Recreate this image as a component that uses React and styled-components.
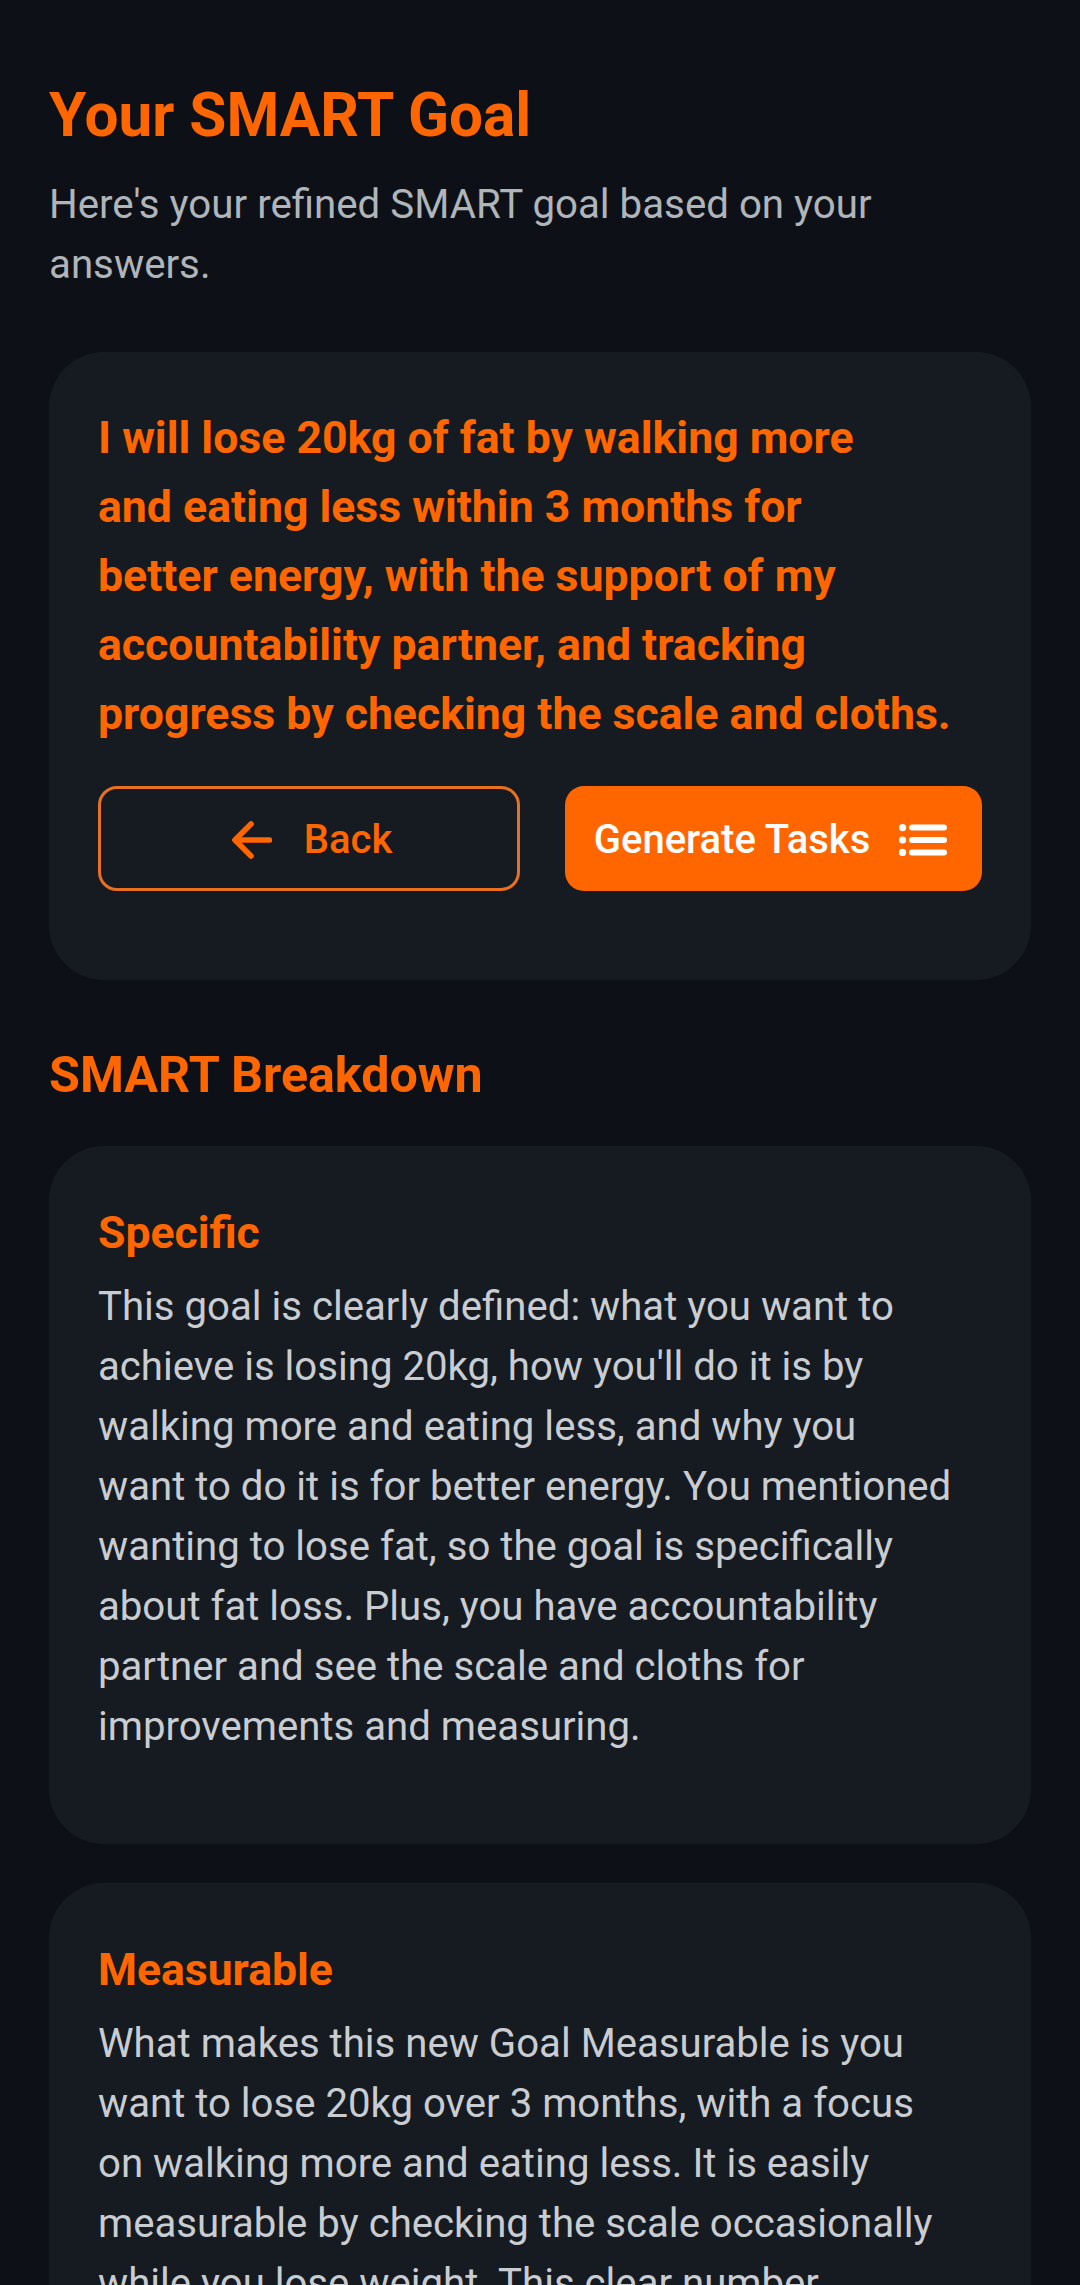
import React from 'react';
import styled, { createGlobalStyle } from 'styled-components';

const GlobalStyle = createGlobalStyle`
  html, body {
    margin: 0;
    height: 2285px;
    overflow: hidden;
    background: #0d1117;
  }
  * {
    box-sizing: border-box;
  }
`;

const Page = styled.div`
  width: 1080px;
  height: 2285px;
  overflow: hidden;
  padding: 75px 49px 0;
  font-family: Roboto, sans-serif;
  background: #0d1117;
`;

const Title = styled.h1`
  margin: 0;
  font-size: 60.3px;
  line-height: 82px;
  font-weight: 700;
  color: #ff6600;
`;

const Subtitle = styled.p`
  margin: 18px 0 0;
  font-size: 40.25px;
  line-height: 60px;
  color: #b0b5ba;
`;

const Card = styled.section`
  margin-top: ${(p) => p.$gap || 39}px;
  padding: ${(p) => p.$top || 49}px 49px ${(p) => p.$bottom || 49}px;
  border-radius: 55px;
  background: #161b22;
`;

const GoalText = styled.p`
  margin: 0;
  font-size: 44.6px;
  line-height: 69px;
  font-weight: 700;
  color: #ff6600;
`;

const Actions = styled.div`
  display: flex;
  justify-content: space-between;
  margin-top: 37px;
  margin-bottom: 40px;
`;

const Button = styled.button`
  display: flex;
  align-items: center;
  justify-content: center;
  gap: ${(p) => p.$gap}px;
  width: ${(p) => p.$width}px;
  height: 105px;
  padding: 2px ${(p) => p.$trim || 0}px 0 ${(p) => p.$shift || 0}px;
  border-radius: 19px;
  border: ${(p) => (p.$primary ? 'none' : '3px solid #e8701f')};
  background: ${(p) => (p.$primary ? '#ff6600' : 'transparent')};
  color: ${(p) => (p.$primary ? '#ffffff' : '#ff6600')};
  font-family: inherit;
  font-size: 40px;
  font-weight: 500;
`;

const SectionTitle = styled.h2`
  margin: 63px 0 0;
  font-size: 50.2px;
  line-height: 64px;
  font-weight: 700;
  color: #ff6600;
`;

const CardTitle = styled.h3`
  margin: 0 0 6px;
  font-size: 44.5px;
  line-height: 76px;
  font-weight: 700;
  color: #ff6600;
`;

const Body = styled.p`
  margin: 0;
  font-size: 40.15px;
  line-height: 60px;
  color: #c9cdd1;
`;

const Line = styled.span`
  display: block;
  white-space: nowrap;
`;

const BackIcon = () => (
  <svg width="40" height="38" viewBox="0 0 40 38" fill="none" stroke="currentColor" strokeWidth="5.6" strokeLinecap="round" strokeLinejoin="round">
    <path d="M37.5 19H3.5" />
    <path d="M19 3L3 19L19 35" />
  </svg>
);

const TasksIcon = () => (
  <svg width="48" height="32" viewBox="0 0 48 32" fill="none">
    <g fill="currentColor">
      <circle cx="3.6" cy="3.6" r="3.6" />
      <circle cx="3.6" cy="16" r="3.6" />
      <circle cx="3.6" cy="28.4" r="3.6" />
    </g>
    <g stroke="currentColor" strokeWidth="6" strokeLinecap="round">
      <path d="M13 3.6H45" />
      <path d="M13 16H45" />
      <path d="M13 28.4H45" />
    </g>
  </svg>
);

const goalLines = [
  'I will lose 20kg of fat by walking more',
  'and eating less within 3 months for',
  'better energy, with the support of my',
  'accountability partner, and tracking',
  'progress by checking the scale and cloths.',
];

const breakdown = [
  {
    title: 'Specific',
    bottom: 87,
    lines: [
      'This goal is clearly defined: what you want to',
      "achieve is losing 20kg, how you'll do it is by",
      'walking more and eating less, and why you',
      'want to do it is for better energy. You mentioned',
      'wanting to lose fat, so the goal is specifically',
      'about fat loss. Plus, you have accountability',
      'partner and see the scale and cloths for',
      'improvements and measuring.',
    ],
  },
  {
    title: 'Measurable',
    lines: [
      'What makes this new Goal Measurable is you',
      'want to lose 20kg over 3 months, with a focus',
      'on walking more and eating less. It is easily',
      'measurable by checking the scale occasionally',
      'while you lose weight. This clear number',
    ],
  },
];

export default function App() {
  return (
    <Page>
      <GlobalStyle />
      <Title>Your SMART Goal</Title>
      <Subtitle>Here's your refined SMART goal based on your answers.</Subtitle>
      <Card $gap={57} $top={52}>
        <GoalText>
          {goalLines.map((line) => (
            <Line key={line}>{line}</Line>
          ))}
        </GoalText>
        <Actions>
          <Button $width={422} $gap={32} $shift={6}>
            <BackIcon />
            Back
          </Button>
          <Button $primary $width={417} $gap={29} $trim={6}>
            Generate Tasks
            <TasksIcon />
          </Button>
        </Actions>
      </Card>
      <SectionTitle>SMART Breakdown</SectionTitle>
      {breakdown.map((item) => (
        <Card key={item.title} $bottom={item.bottom}>
          <CardTitle>{item.title}</CardTitle>
          <Body>
            {item.lines.map((line) => (
              <Line key={line}>{line}</Line>
            ))}
          </Body>
        </Card>
      ))}
    </Page>
  );
}
